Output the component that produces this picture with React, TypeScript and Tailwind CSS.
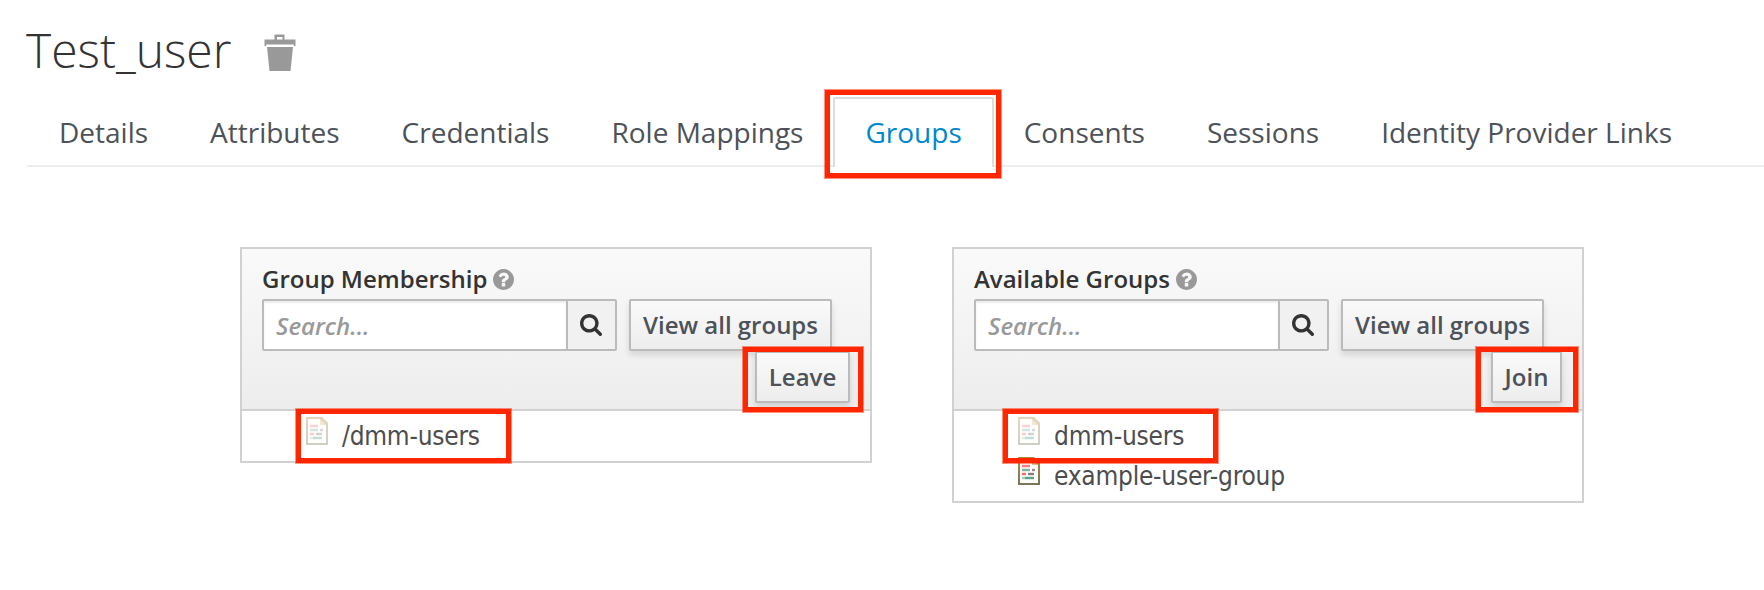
import type { ReactNode } from "react";

const tabs = ["Details", "Attributes", "Credentials", "Role Mappings", "Groups", "Consents", "Sessions", "Identity Provider Links"];

function TrashIcon() {
  return (
    <svg className="ml-[33px] mt-[34px] h-[37px] w-8" viewBox="0 0 32 37" fill="#999">
      <path fillRule="evenodd" d="M10.5 5.5V.5h10v5H31.500V12H30v-1.500H2V12H.500V5.500zM13 3v2.500h5.500V3z" />
      <path d="M3 13h26l-2.500 24h-21z" />
    </svg>
  );
}

function HelpIcon() {
  return (
    <svg className="ml-1.5 mt-1 h-[21px] w-[21px]" viewBox="0 0 1536 1536" fill="#999">
      <path d="M896 1248v-192q0-14-9-23t-23-9H672q-14 0-23 9t-9 23v192q0 14 9 23t23 9h192q14 0 23-9t9-23zm256-672q0-88-55.500-163T958 297t-170-41q-243 0-371 213-15 24 8 42l132 100q7 6 19 6 16 0 25-12 53-68 86-92 34-24 86-24 48 0 85.500 26t37.500 59q0 38-20 61t-68 45q-63 28-115.500 86.500T640 892v36q0 14 9 23t23 9h192q14 0 23-9t9-23q0-19 21.500-49.500T972 829q32-18 49-28.500t46-35 44.500-48 28-60.500 12.500-81zm384 192q0 209-103 385.500T1153.500 1433 768 1536t-385.500-103T103 1153.500 0 768t103-385.500T382.500 103 768 0t385.500 103T1433 382.500 1536 768z" />
    </svg>
  );
}

function SearchIcon() {
  return (
    <svg className="mr-px h-[22px] w-[22px]" viewBox="0 0 1664 1664" fill="#333">
      <path d="M1152 704q0-185-131.500-316.500T704 256 387.500 387.500 256 704t131.500 316.500T704 1152t316.500-131.500T1152 704zm512 832q0 52-38 90t-90 38q-54 0-90-38l-343-342q-179 124-399 124-143 0-273.500-55.500t-225-150-150-225T0 704t55.500-273.500 150-225 225-150T704 0t273.500 55.500 225 150 150 225T1408 704q0 220-124 399l343 343q37 37 37 90z" />
    </svg>
  );
}

function FileIcon({ faded }: { faded?: boolean }) {
  return (
    <svg className={faded ? "h-7 w-[22px] opacity-35" : "h-7 w-[22px]"} viewBox="0 0 22 28">
      <defs>
        <linearGradient id="edge" x1="0" y1="0" x2="0" y2="1">
          <stop offset="0" stopColor="#b58a3c" />
          <stop offset="1" stopColor="#77775a" />
        </linearGradient>
      </defs>
      <path d="M0 0h16l6 6v22H0z" fill="url(#edge)" />
      <path d="M14 2l6 6h-6z" fill="#d9bf85" />
      <path d="M2 2h12v6h6v18H2z" fill="#fdfdfb" />
      <g strokeWidth="2.4">
        <path d="M4 9h8" stroke="#ff7a80" />
        <path d="M4 13h8" stroke="#7fb5a0" />
        <path d="M14 13h3" stroke="#a08a90" />
        <path d="M4 17h4" stroke="#ff6a6f" />
        <path d="M10 17h6" stroke="#808080" />
        <path d="M4 21h3" stroke="#a5d0c0" />
        <path d="M7 21h9" stroke="#5fa58c" />
      </g>
    </svg>
  );
}

function Button({ children, className }: { children: ReactNode; className: string }) {
  return (
    <button className={"h-[52px] shrink-0 whitespace-nowrap rounded-[2px] border-2 border-[#bbb] bg-linear-to-b from-[#fafafa] to-[#ededed] pb-px text-center text-[24px] font-semibold leading-[46px] text-[#4d5258] shadow-[0_4px_6px_rgba(3,3,3,0.12)] " + className}>
      {children}
    </button>
  );
}

function Panel({ title, action, actionClass, groups }: { title: string; action: string; actionClass: string; groups: { name: string; faded?: boolean }[] }) {
  return (
    <section className="w-[632px] border-2 border-[#d1d1d1]">
      <header className="h-[162px] border-b-2 border-[#d1d1d1] bg-linear-to-b from-[#fafafa] to-[#ededed] pl-5 pr-5 pt-4">
        <div className="flex h-[34px]">
          <h2 className="whitespace-nowrap text-[24px] font-semibold leading-[28px] text-[#333]">{title}</h2>
          <HelpIcon />
        </div>
        <div className="flex">
          <input placeholder="Search..." className="h-[52px] w-[306px] rounded-l-[2px] border-2 border-[#bbb] bg-white px-3 text-[24px] shadow-[inset_0_2px_2px_rgba(3,3,3,0.075)] placeholder:font-semibold placeholder:italic placeholder:text-[#999]" />
          <span className="-ml-0.5 mr-3 flex h-[52px] w-[51px] items-center justify-center rounded-r-[2px] border-2 border-[#bbb] bg-[#f1f1f1]">
            <SearchIcon />
          </span>
          <Button className="w-[203px]">View all groups</Button>
        </div>
        <div className="flex justify-end">
          <Button className={actionClass}>{action}</Button>
        </div>
      </header>
      <ul className="pb-1 pl-[64px] pt-1.5">
        {groups.map((g) => (
          <li key={g.name} className="flex h-10 gap-[14px]">
            <FileIcon faded={g.faded} />
            <span className="pt-0.5 font-['DejaVu_Sans_Condensed','DejaVu_Sans',sans-serif] text-[26px] leading-[34px] tracking-[-0.22px] text-[#4d4d4d]">{g.name}</span>
          </li>
        ))}
      </ul>
    </section>
  );
}

function Mark({ className }: { className: string }) {
  return <div className={"pointer-events-none absolute border-[5px] border-[#ff2600] outline outline-[#ff260080] " + className} />;
}

export default function App() {
  return (
    <main className="relative h-[590px] w-[1764px] overflow-hidden bg-white font-['Open_Sans',sans-serif]">
      <div className="flex h-[97px] pl-[26px]">
        <h1 className="whitespace-nowrap pt-[17px] text-[48px] font-light leading-[66px] text-[#333]">Test_user</h1>
        <TrashIcon />
      </div>
      <nav className="ml-[27px] flex h-[70px] border-b-2 border-[#ededed]">
        {tabs.map((t) => (
          <a key={t} className={t === "Groups"
            ? "-mr-0.5 h-[70px] whitespace-nowrap rounded-t-[2px] border-2 border-b-0 border-[#ddd] bg-white px-[30px] text-[28px] leading-[66px] text-[#0088ce]"
            : "-mr-0.5 h-[68px] whitespace-nowrap border-2 border-b-0 border-transparent px-[30px] text-[28px] leading-[66px] text-[#4d5258]"}>
            {t}
          </a>
        ))}
      </nav>
      <div className="ml-[240px] mt-20 flex items-start gap-20">
        <Panel title="Group Membership" action="Leave" actionClass="w-[95px]" groups={[{ name: "/dmm-users", faded: true }]} />
        <Panel title="Available Groups" action="Join" actionClass="w-[71px]" groups={[{ name: "dmm-users", faded: true }, { name: "example-user-group" }]} />
      </div>
      <Mark className="left-[825px] top-[90px] h-[88px] w-[176px]" />
      <Mark className="left-[743px] top-[347px] h-[65px] w-[120px]" />
      <Mark className="left-[1476px] top-[347px] h-[65px] w-[102px]" />
      <Mark className="left-[296px] top-[409px] h-[54px] w-[215px]" />
      <Mark className="left-[1003px] top-[409px] h-[54px] w-[215px]" />
    </main>
  );
}
